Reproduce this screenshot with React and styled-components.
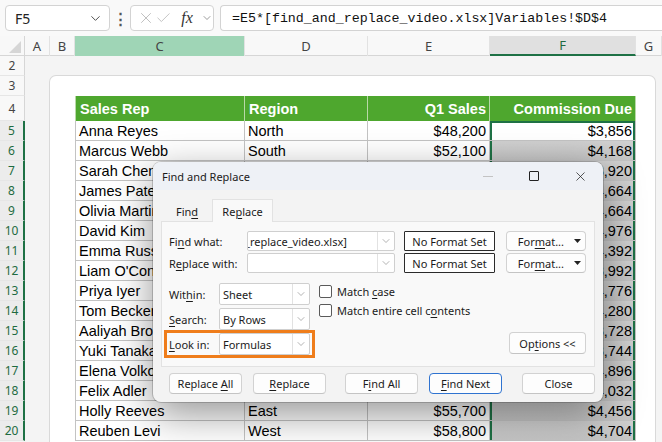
import styled, { createGlobalStyle } from 'styled-components';
import { ChevronDown, X, Check } from 'lucide-react';

const GlobalStyle = createGlobalStyle`
  html, body { margin: 0; padding: 0; background: #fff; }
  body { font-family: 'Liberation Sans', Arial, sans-serif; }
  * { box-sizing: border-box; }
`;

const ui = `'Noto Sans', 'Open Sans', sans-serif`;

const Screen = styled.div`
  position: relative;
  width: 662px;
  height: 442px;
  overflow: hidden;
  background: #f4f4f4;
`;

/* ---------- formula bar ---------- */

const FormulaBar = styled.div`
  display: flex;
  align-items: center;
  height: 36px;
  padding-left: 5px;
  background: #f9f9f9;
`;

const Field = styled.div`
  display: flex;
  align-items: center;
  height: 26px;
  background: #fff;
  border: 1px solid #d3d3d3;
  border-radius: 4px;
`;

const NameBox = styled(Field)`
  width: 105px;
  justify-content: space-between;
  padding: 0 6px 0 9px;
  font: 14px ${ui};
  color: #222;
`;

const Dots = styled.div`
  width: 20px;
  text-align: center;
  font: bold 15px ${ui};
  color: #555;
`;

const FnBox = styled(Field)`
  width: 84px;
  padding-left: 6px;
`;

const Slot = styled.span`
  display: flex;
  align-items: center;
  justify-content: center;
  width: ${(p) => p.$w}px;
  margin-left: ${(p) => p.$ml || 0}px;
`;

const Fx = styled.span`
  font: italic 16px 'Liberation Serif', serif;
  color: #333;
`;

const FormulaInput = styled(Field)`
  flex: 1;
  margin-left: 6px;
  border-right: none;
  border-radius: 4px 0 0 4px;
  padding-left: 11px;
  font: 13.3px 'Liberation Mono', monospace;
  color: #111;
  white-space: nowrap;
`;

/* ---------- column headers ---------- */

const ColHeaderRow = styled.div`
  display: grid;
  grid-template-columns: 25px 25px 25px 170px 123px 122px 146px 26px;
  height: 20px;
  background: #f8f8f8;
  border-bottom: 1px solid #d6d6d6;
`;

const ColHead = styled.div`
  display: flex;
  align-items: center;
  justify-content: center;
  font: 13px ${ui};
  color: ${(p) => (p.$selected ? '#1e6b41' : '#444')};
  background: ${(p) => (p.$green ? '#9fd5b6' : p.$selected ? '#e0e0e0' : 'transparent')};
  border-right: 1px solid #e2e2e2;
  border-bottom: ${(p) => (p.$selected ? '2px solid #1e7145' : 'none')};
`;

const Corner = styled.div`
  display: flex;
  align-items: flex-end;
  justify-content: flex-end;
  padding: 0 3px 3px 0;
  border-right: 1px solid #d6d6d6;
`;

/* ---------- body ---------- */

const Body = styled.div`
  display: flex;
`;

const RowHeaders = styled.div`
  width: 25px;
  flex: none;
  display: flex;
  flex-direction: column;
`;

const RowNum = styled.div`
  height: ${(p) => p.$h}px;
  flex: none;
  display: flex;
  align-items: center;
  justify-content: center;
  font: 12px ${ui};
  color: ${(p) => (p.$selected ? '#1e6b41' : '#444')};
  background: ${(p) => (p.$selected ? '#ececec' : '#f8f8f8')};
  border-bottom: 1px solid #e6e6e6;
  border-right: ${(p) => (p.$selected ? '2px solid #1e7145' : '1px solid #d6d6d6')};
`;

const SheetArea = styled.div`
  flex: 1;
  padding: 20px 0 0 25px;
  background: #f4f4f4;
`;

const Card = styled.div`
  width: 605px;
  height: 400px;
  padding: 20px 19px 0 25px;
  background: #fff;
  border-radius: 6px 6px 0 0;
  box-shadow: 0 0 0 1px #d9d9d9;
`;

const Table = styled.div`
  display: grid;
  grid-template-columns: 170px 123px 122px 146px;
`;

const HeadCell = styled.div`
  height: 25px;
  padding: 0 3px 0 4px;
  display: flex;
  align-items: center;
  justify-content: ${(p) => (p.$right ? 'flex-end' : 'flex-start')};
  background: #4ea72e;
  color: #fff;
  font: bold 14.5px 'Liberation Sans', Arial, sans-serif;
  border-right: 1px solid #b9d9a8;
  border-left: ${(p) => (p.$first ? '1px solid #b9d9a8' : 'none')};
  white-space: nowrap;
`;

const Cell = styled.div`
  height: 20px;
  padding: 0 3px 0 3px;
  display: flex;
  align-items: center;
  justify-content: ${(p) => (p.$right ? 'flex-end' : 'flex-start')};
  font: 14.5px 'Liberation Sans', Arial, sans-serif;
  color: #000;
  white-space: nowrap;
  overflow: hidden;
  background: ${(p) => (p.$shade ? 'linear-gradient(#d0d0d0, #c6c6c6)' : '#fff')};
  border-right: 1px solid #c3c3c3;
  border-bottom: 1px solid #c3c3c3;
  border-left: ${(p) => (p.$first ? '1px solid #c3c3c3' : 'none')};
  box-shadow: ${(p) =>
    p.$sel
      ? `inset 2px 0 0 #1e7145, inset -2px 0 0 #1e7145${p.$top ? ', inset 0 2px 0 #1e7145' : ''}`
      : 'none'};
`;

/* ---------- dialog ---------- */

const Dialog = styled.div`
  position: absolute;
  left: 153px;
  top: 162px;
  width: 450px;
  height: 240px;
  background: #f3f3f3;
  border-radius: 8px;
  box-shadow: 0 0 0 1px rgba(0, 0, 0, 0.18), 0 12px 40px rgba(0, 0, 0, 0.42);
  font: 11px ${ui};
  color: #1b1b1b;
  overflow: hidden;
`;

const TitleBar = styled.div`
  display: flex;
  align-items: center;
  height: 28px;
  padding-left: 9px;
  background: #eef1f6;
`;

const Title = styled.div`
  flex: 1;
  font-size: 11px;
`;

const WinButton = styled.div`
  width: 46px;
  height: 28px;
  display: flex;
  align-items: center;
  justify-content: center;
`;

const MinLine = styled.span`
  width: 10px;
  height: 1px;
  background: #c3c3c3;
`;

const MaxBox = styled.span`
  width: 10px;
  height: 10px;
  border: 1px solid #222;
  border-radius: 1px;
`;

const DialogBody = styled.div`
  padding: 9px 8px 0 8px;
`;

const Tabs = styled.div`
  display: flex;
  align-items: flex-end;
  height: 22px;
  padding-left: 1px;
`;

const Tab = styled.div`
  width: ${(p) => p.$w}px;
  height: ${(p) => (p.$active ? 23 : 19)}px;
  display: flex;
  align-items: center;
  justify-content: center;
  background: ${(p) => (p.$active ? '#f9f9f9' : 'transparent')};
  border: ${(p) => (p.$active ? '1px solid #e2e2e2' : 'none')};
  border-bottom: none;
  margin-bottom: ${(p) => (p.$active ? -1 : 0)}px;
  position: relative;
  z-index: 1;
`;

const Panel = styled.div`
  width: 434px;
  height: 146px;
  background: #f9f9f9;
  border: 1px solid #e2e2e2;
  padding: 9px 8px 0 7px;
`;

const FieldRow = styled.div`
  display: grid;
  grid-template-columns: 69px 148px 91px 80px;
  column-gap: 9px;
  height: 20px;
  margin-bottom: 2px;
  align-items: center;
`;

const Combo = styled.div`
  height: 20px;
  display: flex;
  align-items: stretch;
  background: #fff;
  border: 1px solid #cfcfcf;
  border-radius: 2px;
  overflow: hidden;
`;

const ComboText = styled.div`
  flex: 1;
  display: flex;
  align-items: center;
  padding-left: ${(p) => (p.$pl === undefined ? 3 : p.$pl)}px;
  white-space: nowrap;
  overflow: hidden;
`;

const Scrolled = styled.span`
  margin-left: -3px;
`;

const ComboArrow = styled.div`
  width: 17px;
  display: flex;
  align-items: center;
  justify-content: center;
  border-left: 1px solid #e2e2e2;
`;

const FormatBox = styled.div`
  height: 20px;
  display: flex;
  align-items: center;
  justify-content: center;
  background: #fff;
  border: 1.5px solid #2b2b2b;
  border-radius: 1px;
`;

const Button = styled.div`
  width: ${(p) => p.$w || 73}px;
  height: ${(p) => p.$h || 21}px;
  margin-left: ${(p) => p.$ml || 0}px;
  display: flex;
  align-items: center;
  justify-content: center;
  background: #fdfdfd;
  border: 1px solid ${(p) => (p.$focus ? '#2f73d0' : '#d2d2d2')};
  border-bottom-color: ${(p) => (p.$focus ? '#2f73d0' : '#c4c4c4')};
  border-radius: 4px;
  white-space: nowrap;
`;

const FormatButton = styled(Button)`
  justify-content: flex-end;
  gap: 10px;
  padding-right: 4px;
  margin-left: 2px;
`;

const Key = styled.span`
  text-decoration: underline;
  text-underline-offset: 2px;
`;

const OptionsArea = styled.div`
  display: flex;
  margin-top: 10px;
`;

const SelectCol = styled.div`
  display: flex;
  flex-direction: column;
  gap: 3px;
  width: 143px;
`;

const SelectRow = styled.div`
  display: flex;
  align-items: center;
  height: 22px;
  margin-left: ${(p) => (p.$hl ? -2 : 0)}px;
  padding-left: ${(p) => (p.$hl ? 2 : 0)}px;
  box-shadow: ${(p) => (p.$hl ? '0 0 0 3px #ef7d1b' : 'none')};
`;

const SelectLabel = styled.div`
  width: 50px;
`;

const Select = styled(Combo)`
  width: 91px;
  height: 22px;
`;

const CheckCol = styled.div`
  display: flex;
  flex-direction: column;
  gap: 6px;
  margin-left: 7px;
  padding-top: 2px;
`;

const CheckRow = styled.div`
  display: flex;
  align-items: center;
  gap: 5px;
  height: 13px;
`;

const Box = styled.span`
  width: 13px;
  height: 13px;
  border: 1px solid #5a5a5a;
  border-radius: 2px;
  background: #fff;
`;

const OptionsCol = styled.div`
  flex: 1;
  display: flex;
  align-items: flex-end;
  justify-content: flex-end;
  padding-bottom: 1px;
`;

const ButtonRow = styled.div`
  display: flex;
  margin-top: 6px;
  padding-left: 8px;
`;

const Tri = () => (
  <svg width="7" height="4" viewBox="0 0 7 4">
    <polygon points="0,0 7,0 3.5,4" fill="#222" />
  </svg>
);

const Arrow = () => <ChevronDown size={12} strokeWidth={1.3} color="#8a8a8a" />;

const rows = [
  ['Anna Reyes', 'North', '$48,200', '$3,856'],
  ['Marcus Webb', 'South', '$52,100', '$4,168'],
  ['Sarah Chen', 'East', '$49,000', '$3,920'],
  ['James Patel', 'West', '$58,300', '$4,664'],
  ['Olivia Martinez', 'North', '$58,300', '$4,664'],
  ['David Kim', 'South', '$62,200', '$4,976'],
  ['Emma Russo', 'East', '$54,900', '$4,392'],
  ["Liam O'Connor", 'West', '$49,900', '$3,992'],
  ['Priya Iyer', 'North', '$59,700', '$4,776'],
  ['Tom Becker', 'South', '$53,500', '$4,280'],
  ['Aaliyah Brooks', 'East', '$46,600', '$3,728'],
  ['Yuki Tanaka', 'West', '$46,800', '$3,744'],
  ['Elena Volkova', 'North', '$61,200', '$4,896'],
  ['Felix Adler', 'South', '$50,400', '$4,032'],
  ['Holly Reeves', 'East', '$55,700', '$4,456'],
  ['Reuben Levi', 'West', '$58,800', '$4,704'],
];

const rowNums = [
  { n: 2, h: 20 },
  { n: 3, h: 20 },
  { n: 4, h: 25 },
  ...rows.map((_, i) => ({ n: i + 5, h: 20, sel: true })),
];

export default function App() {
  return (
    <Screen>
      <GlobalStyle />
      <FormulaBar>
        <NameBox>
          F5
          <ChevronDown size={15} strokeWidth={1.5} color="#444" />
        </NameBox>
        <Dots>⋮</Dots>
        <FnBox>
          <Slot $w={18}><X size={18} strokeWidth={1.1} color="#b3b3b3" /></Slot>
          <Slot $w={17}><Check size={18} strokeWidth={1.1} color="#b3b3b3" /></Slot>
          <Slot $w={22} $ml={4}><Fx>fx</Fx></Slot>
          <Slot $w={12} $ml={3}><ChevronDown size={12} strokeWidth={1.3} color="#666" /></Slot>
        </FnBox>
        <FormulaInput>=E5*[find_and_replace_video.xlsx]Variables!$D$4</FormulaInput>
      </FormulaBar>

      <ColHeaderRow>
        <Corner>
          <svg width="12" height="12" viewBox="0 0 12 12">
            <polygon points="12,0 12,12 0,12" fill="#d6d6d6" />
          </svg>
        </Corner>
        <ColHead>A</ColHead>
        <ColHead>B</ColHead>
        <ColHead $green>C</ColHead>
        <ColHead>D</ColHead>
        <ColHead>E</ColHead>
        <ColHead $selected>F</ColHead>
        <ColHead>G</ColHead>
      </ColHeaderRow>

      <Body>
        <RowHeaders>
          {rowNums.map((r) => (
            <RowNum key={r.n} $h={r.h} $selected={r.sel}>{r.n}</RowNum>
          ))}
        </RowHeaders>
        <SheetArea>
          <Card>
            <Table>
              <HeadCell $first>Sales Rep</HeadCell>
              <HeadCell>Region</HeadCell>
              <HeadCell $right>Q1 Sales</HeadCell>
              <HeadCell $right>Commission Due</HeadCell>
              {rows.map((r, i) => [
                <Cell key={`a${i}`} $first>{r[0]}</Cell>,
                <Cell key={`b${i}`}>{r[1]}</Cell>,
                <Cell key={`c${i}`} $right>{r[2]}</Cell>,
                <Cell key={`d${i}`} $right $sel $top={i === 0} $shade={i > 0}>{r[3]}</Cell>,
              ])}
            </Table>
          </Card>
        </SheetArea>
      </Body>

      <Dialog>
        <TitleBar>
          <Title>Find and Replace</Title>
          <WinButton><MinLine /></WinButton>
          <WinButton><MaxBox /></WinButton>
          <WinButton><X size={15} strokeWidth={1.2} color="#222" /></WinButton>
        </TitleBar>
        <DialogBody>
          <Tabs>
            <Tab $w={50}><span>Fin<Key>d</Key></span></Tab>
            <Tab $w={61} $active><span>Re<Key>p</Key>lace</span></Tab>
          </Tabs>
          <Panel>
            <FieldRow>
              <div>Fi<Key>n</Key>d what:</div>
              <Combo>
                <ComboText $pl={0}>
                  <Scrolled>_replace_video.xlsx]</Scrolled>
                </ComboText>
                <ComboArrow><Arrow /></ComboArrow>
              </Combo>
              <FormatBox>No Format Set</FormatBox>
              <FormatButton $w={80} $h={20}>
                <span>For<Key>m</Key>at...</span>
                <Tri />
              </FormatButton>
            </FieldRow>
            <FieldRow>
              <div>R<Key>e</Key>place with:</div>
              <Combo>
                <ComboText />
                <ComboArrow><Arrow /></ComboArrow>
              </Combo>
              <FormatBox>No Format Set</FormatBox>
              <FormatButton $w={80} $h={20}>
                <span>For<Key>m</Key>at...</span>
                <Tri />
              </FormatButton>
            </FieldRow>

            <OptionsArea>
              <SelectCol>
                <SelectRow>
                  <SelectLabel>Wit<Key>h</Key>in:</SelectLabel>
                  <Select>
                    <ComboText>Sheet</ComboText>
                    <ComboArrow><Arrow /></ComboArrow>
                  </Select>
                </SelectRow>
                <SelectRow>
                  <SelectLabel><Key>S</Key>earch:</SelectLabel>
                  <Select>
                    <ComboText>By Rows</ComboText>
                    <ComboArrow><Arrow /></ComboArrow>
                  </Select>
                </SelectRow>
                <SelectRow $hl>
                  <SelectLabel><Key>L</Key>ook in:</SelectLabel>
                  <Select>
                    <ComboText>Formulas</ComboText>
                    <ComboArrow><Arrow /></ComboArrow>
                  </Select>
                </SelectRow>
              </SelectCol>
              <CheckCol>
                <CheckRow><Box /><span>Match <Key>c</Key>ase</span></CheckRow>
                <CheckRow><Box /><span>Match entire cell c<Key>o</Key>ntents</span></CheckRow>
              </CheckCol>
              <OptionsCol>
                <Button $w={77} $h={22}><span>Op<Key>t</Key>ions &lt;&lt;</span></Button>
              </OptionsCol>
            </OptionsArea>
          </Panel>
          <ButtonRow>
            <Button><span>Replace <Key>A</Key>ll</span></Button>
            <Button $ml={11}><span><Key>R</Key>eplace</span></Button>
            <Button $ml={19}><span>F<Key>i</Key>nd All</span></Button>
            <Button $ml={11} $focus><span><Key>F</Key>ind Next</span></Button>
            <Button $ml={20}><span>Close</span></Button>
          </ButtonRow>
        </DialogBody>
      </Dialog>
    </Screen>
  );
}
